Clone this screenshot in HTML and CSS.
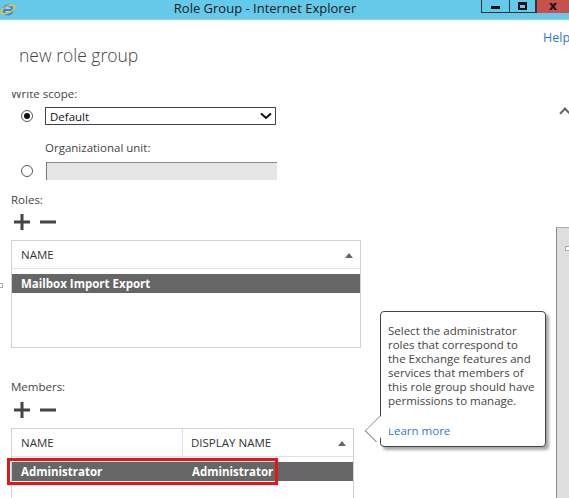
FILE: index.html
```html
<!DOCTYPE html>
<html>
<head>
<meta charset="utf-8">
<link rel="stylesheet" href="styles.css">
</head>
<body>
<div class="window">
  <div class="titlebar">
    <svg class="ie-logo" width="16" height="16" viewBox="0 0 16 16">
      <circle cx="8" cy="9" r="5.5" fill="#3a8fdc"/>
      <circle cx="8" cy="9" r="3" fill="#9fd3f5"/>
      <rect x="4" y="8.3" width="8" height="1.6" fill="#2b6fc0"/>
      <ellipse cx="8" cy="8.5" rx="7.5" ry="3.2" fill="none" stroke="#f2c12e" stroke-width="1.4" transform="rotate(-25 8 8.5)"/>
    </svg>
    <div class="title">Role Group - Internet Explorer</div>
    <div class="win-buttons">
      <div class="wbtn min"><span class="min-glyph"></span></div>
      <div class="wbtn max"><span class="max-glyph"></span></div>
      <div class="wbtn close"><span class="close-glyph">x</span></div>
    </div>
  </div>
  <div class="page">
    <div class="header">
      <h1 class="heading">new role group</h1>
      <a class="help">Help</a>
    </div>
    <div class="content">
      <div class="label first">Write scope:</div>
      <div class="radio-row r1">
        <span class="radio checked"></span>
        <div class="select">
          <span>Default</span>
          <svg class="chev" width="12" height="8" viewBox="0 0 12 8"><path d="M1 1.5 L6 6 L11 1.5" fill="none" stroke="#111" stroke-width="2"/></svg>
        </div>
      </div>
      <div class="label sub">Organizational unit:</div>
      <div class="radio-row r2">
        <span class="radio"></span>
        <div class="textbox"></div>
      </div>
      <div class="label roles-label">Roles:</div>
      <div class="icons r-icons">
        <svg width="16" height="16" viewBox="0 0 16 16"><path d="M0 8 H16 M8 0 V16" stroke="#444" stroke-width="3"/></svg>
        <svg width="16" height="16" viewBox="0 0 16 16"><path d="M0 8 H16" stroke="#444" stroke-width="3"/></svg>
      </div>
      <div class="grid roles">
        <div class="grid-head">
          <div class="col full">NAME</div>
          <span class="sort"></span>
        </div>
        <div class="grid-row selected">
          <div class="cell">Mailbox Import Export</div>
        </div>
      </div>
      <div class="label members-label">Members:</div>
      <div class="icons m-icons">
        <svg width="16" height="16" viewBox="0 0 16 16"><path d="M0 8 H16 M8 0 V16" stroke="#444" stroke-width="3"/></svg>
        <svg width="16" height="16" viewBox="0 0 16 16"><path d="M0 8 H16" stroke="#444" stroke-width="3"/></svg>
      </div>
      <div class="grid members">
        <div class="grid-head">
          <div class="col c1">NAME</div>
          <div class="col c2">DISPLAY NAME</div>
          <span class="sort"></span>
        </div>
        <div class="grid-row selected">
          <div class="cell c1">Administrator</div>
          <div class="cell c2">Administrator</div>
        </div>
        <div class="highlight"></div>
      </div>
    </div>
    <div class="caret-up"></div>
    <span class="edge-mark left-mark"></span>
    <div class="scrollbar"><span class="edge-mark sb-mark"></span></div>
    <div class="tooltip">
      <p class="tip-text">Select the administrator roles that correspond to the Exchange features and services that members of this role group should have permissions to manage.</p>
      <a class="learn">Learn more</a>
      <span class="arrow"></span>
    </div>
  </div>
</div>
</body>
</html>
```

FILE: styles.css
```css
* { box-sizing: border-box; }
html, body { margin: 0; padding: 0; }
body {
  width: 569px;
  height: 498px;
  overflow: hidden;
  background: #fff;
  font-family: "Open Sans", "Noto Sans", sans-serif;
  color: #444;
}
.window { width: 569px; height: 498px; display: flex; flex-direction: column; }

.titlebar {
  height: 20px;
  flex: none;
  background: #65c9ea;
  border-bottom: 1px solid #8fd3ec;
  display: flex;
  align-items: flex-start;
  position: relative;
}
.ie-logo { margin: 1px 0 0 0; }
.title {
  position: absolute;
  left: 0; right: 39px; top: 0;
  text-align: center;
  font-size: 13px;
  line-height: 17px;
  color: #1a1a1a;
}
.win-buttons { margin-left: auto; display: flex; height: 13px; }
.wbtn {
  height: 13px;
  display: flex;
  align-items: center;
  justify-content: center;
  border: 1px solid #333;
  border-top: none;
}
.wbtn.min { width: 28px; border-right: none; }
.wbtn.max { width: 27px; }
.wbtn.close { width: 33px; background: #c7504b; border: none; border-left: 1px solid #333; }
.min-glyph { width: 9px; height: 3px; background: #111; margin-top: 3px; }
.max-glyph { width: 9px; height: 8px; border: 2px solid #111; border-top-width: 3px; }
.close-glyph { font: bold 13px/10px "DejaVu Sans", sans-serif; color: #111; margin-top: -2px; }

.page { position: relative; flex: 1; display: flex; flex-direction: column; }
.header { height: 72px; flex: none; position: relative; }
.heading {
  margin: 0;
  padding: 23px 0 0 19px;
  font-family: "Open Sans", sans-serif;
  font-weight: 300;
  font-size: 17.5px;
  line-height: 24px;
  color: #444;
}
.help {
  position: absolute;
  left: 543px;
  top: 9px;
  font-size: 12.5px;
  color: #2a7bd0;
  white-space: nowrap;
}

.content {
  height: 406px;
  overflow: hidden;
  padding-left: 11px;
  display: flex;
  flex-direction: column;
  align-items: flex-start;
}
.label { font-size: 11.5px; line-height: 14px; color: #444; }
.label.first { margin-top: -5px; }
.radio-row { display: flex; align-items: center; margin-top: 6px; height: 18px; }
.radio {
  width: 12px; height: 12px;
  border: 1px solid #555;
  border-radius: 50%;
  margin: 0 12px 0 10px;
  position: relative;
  background: #fff;
}
.radio.checked::after {
  content: "";
  position: absolute;
  left: 2px; top: 2px;
  width: 6px; height: 6px;
  border-radius: 50%;
  background: #111;
}
.select {
  width: 231px; height: 18px;
  border: 1px solid #444;
  display: flex;
  align-items: center;
  padding: 0 2px 0 4px;
  font-size: 11.5px;
  color: #111;
}
.select span { flex: 1; }
.chev { margin-right: 1px; }
.label.sub { margin-top: 16px; padding-left: 34px; }
.radio-row.r2 { margin-top: 7px; }
.textbox {
  width: 231px; height: 18px;
  margin-left: 1px;
  background: #e6e6e6;
  border-left: 1px solid #777;
  border-top: 1px solid #888;
}
.label.roles-label { margin-top: 13px; }
.label.members-label { margin-top: 32px; }
.icons { display: flex; gap: 10px; margin-left: 3px; height: 16px; }
.r-icons { margin-top: 7px; }
.m-icons { margin-top: 8px; }

.grid {
  border: 1px solid #cfd3d6;
  margin-top: 10px;
  position: relative;
  display: flex;
  flex-direction: column;
  flex: none;
}
.roles { width: 350px; height: 108px; }
.members { width: 343px; height: 90px; }
.grid-head {
  height: 28px;
  flex: none;
  border-bottom: 1px solid #dfe2e4;
  display: flex;
  align-items: stretch;
  position: relative;
  font-size: 11.5px;
  color: #333;
}
.col { display: flex; align-items: center; padding-left: 9px; }
.col.full { flex: 1; }
.members .col.c1 { width: 171px; border-right: 1px solid #dfe2e4; flex: none; }
.members .col.c2 { flex: 1; padding-left: 8px; }
.sort {
  position: absolute;
  right: 7px; top: 12px;
  width: 0; height: 0;
  border-left: 4px solid transparent;
  border-right: 4px solid transparent;
  border-bottom: 5px solid #666;
}
.grid-row {
  margin-top: 5px;
  height: 19px;
  display: flex;
  align-items: center;
  flex: none;
}
.grid-row.selected { background: #666; color: #fff; font-weight: 700; font-size: 11.5px; }
.cell { padding-left: 9px; }
.members .cell.c1 { width: 172px; flex: none; }
.members .cell.c2 { padding-left: 8px; }
.highlight {
  position: absolute;
  left: -5px; top: 29px;
  width: 271px; height: 27px;
  border: 3px solid #e8141b;
}

.caret-up {
  position: absolute;
  left: 561px; top: 89px;
  width: 8px; height: 8px;
  border-left: 2px solid #666;
  border-top: 2px solid #666;
  transform: rotate(45deg);
}
.scrollbar {
  position: absolute;
  left: 556px; top: 207px;
  width: 20px; bottom: 0;
  background: #dedede;
  border-left: 1px solid #8a8a8a;
  border-top: 1px solid #aaa;
}
.edge-mark {
  position: absolute;
  width: 5px; height: 5px;
  border: 1px solid #aaa;
  background: #fff;
}
.left-mark { left: -2px; top: 263px; }
.sb-mark { left: 8px; top: 18px; }

.tooltip {
  position: absolute;
  left: 380px; top: 291px;
  width: 166px; height: 136px;
  background: #fff;
  border: 1px solid #444;
  border-radius: 4px;
  box-shadow: 3px 3px 3px rgba(0,0,0,0.35);
  padding: 12px 0 0 7px;
  font-size: 11.5px;
  line-height: 13.9px;
  color: #444;
}
.tip-text { margin: 0; width: 148px; }
.learn { display: block; margin-top: 17px; color: #2a7bd0; }
.arrow {
  position: absolute;
  left: -12px; top: 108px;
  width: 18px; height: 18px;
  background: #fff;
  border-left: 1px solid #999;
  border-bottom: 1px solid #999;
  transform: rotate(45deg) scale(0.9, 1.2);
}
```
